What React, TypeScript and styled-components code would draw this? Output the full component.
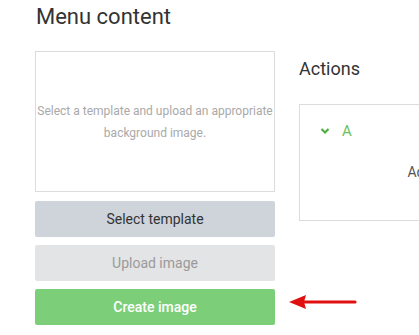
import React from "react";
import styled, { createGlobalStyle } from "styled-components";

const Global = createGlobalStyle`
  html, body { margin: 0; padding: 0; background: #fff; overflow: hidden; }
  body { font-family: Roboto, "Liberation Sans", sans-serif; }
  * { box-sizing: border-box; }
`;

const Page = styled.div`
  position: relative;
  width: 419px;
  height: 335px;
  overflow: hidden;
  padding: 2px 0 0 35px;
`;

const Title = styled.h1`
  margin: 0 0 19px 1px;
  font-size: 22px;
  font-weight: 400;
  line-height: 30px;
  color: #333;
`;

const Row = styled.div`
  display: flex;
  gap: 24px;
  width: 600px;
`;

const LeftCol = styled.div`
  width: 240px;
  display: flex;
  flex-direction: column;
  gap: 8px;
`;

const Preview = styled.div`
  height: 141px;
  border: 1px solid #dcdcdc;
  display: flex;
  align-items: center;
  justify-content: center;
  text-align: center;
  font-size: 12px;
  line-height: 22px;
  color: #a9a9a9;
  margin-bottom: 1px;
  padding: 0;
  white-space: nowrap;
`;

const Button = styled.button<{ $variant: "grey" | "disabled" | "green" }>`
  height: 36px;
  border: none;
  border-radius: 2px;
  font-family: Roboto, "Liberation Sans", sans-serif;
  font-size: 14px;
  font-weight: ${(p) => (p.$variant === "green" ? 500 : 400)};
  background: ${(p) =>
    p.$variant === "grey" ? "#cfd3da" : p.$variant === "disabled" ? "#e3e4e6" : "#7ccf78"};
  color: ${(p) => (p.$variant === "grey" ? "#333" : p.$variant === "disabled" ? "#9a9a9a" : "#fff")};
  padding: 0;
`;

const RightCol = styled.div`
  width: 284px;
  padding-top: 7px;
`;

const SubTitle = styled.h2`
  margin: 0 0 24px 0;
  font-size: 18px;
  font-weight: 400;
  line-height: 22px;
  color: #333;
`;

const ActionsBox = styled.div`
  height: 117px;
  border: 1px solid #dcdcdc;
  padding: 16px 20px;
`;

const GroupHead = styled.div`
  display: flex;
  align-items: center;
  gap: 12px;
  color: #6cbf5c;
  font-size: 15px;
  line-height: 20px;
`;

const Empty = styled.div`
  margin-top: 23px;
  text-align: center;
  font-size: 14px;
  color: #555;
`;

const Arrow = styled.svg`
  position: absolute;
  left: 287px;
  top: 293px;
`;

export default function App() {
  return (
    <>
      <Global />
      <Page>
        <Title>Menu content</Title>
        <Row>
          <LeftCol>
            <Preview>
              Select a template and upload an appropriate
              <br />
              background image.
            </Preview>
            <Button $variant="grey">Select template</Button>
            <Button $variant="disabled">Upload image</Button>
            <Button $variant="green">Create image</Button>
          </LeftCol>
          <RightCol>
            <SubTitle>Actions</SubTitle>
            <ActionsBox>
              <GroupHead>
                <svg width="10" height="8" viewBox="0 0 10 8">
                  <path d="M1.5 2 L5 5.5 L8.5 2" fill="none" stroke="#4caf3f" strokeWidth="2.2" />
                </svg>
                <span>A</span>
              </GroupHead>
              <Empty>Add action</Empty>
            </ActionsBox>
          </RightCol>
        </Row>
        <Arrow width="72" height="20" viewBox="0 0 72 20">
          <path d="M2 9 L19 2 L17 9 L19 16 Z" fill="#e01010" />
          <path d="M17 9 L68 9" stroke="#e01010" strokeWidth="3.2" strokeLinecap="round" />
        </Arrow>
      </Page>
    </>
  );
}
